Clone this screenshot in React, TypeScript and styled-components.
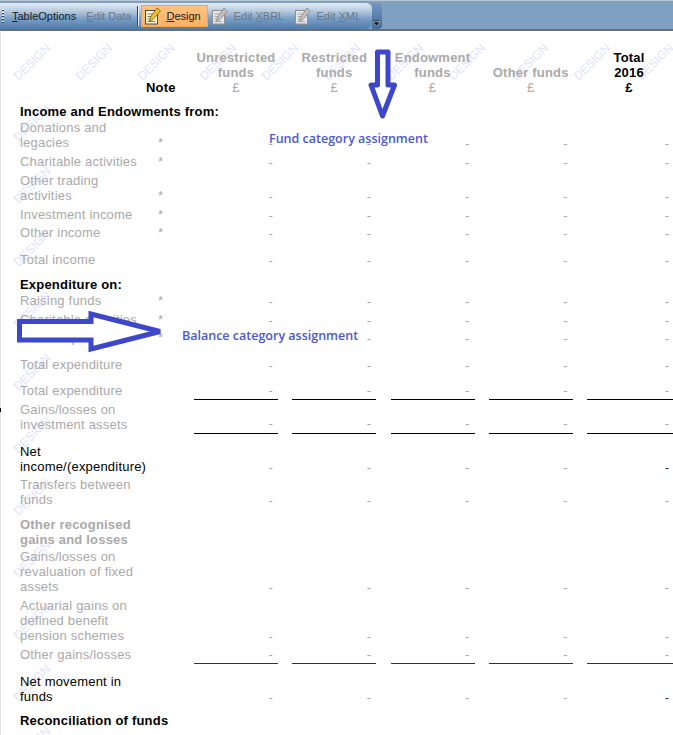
import React from 'react';
import styled, { createGlobalStyle } from 'styled-components';

const GlobalStyle = createGlobalStyle`
  html, body {
    margin: 0;
    padding: 0;
    background: #fff;
  }
`;

const Page = styled.div`
  position: relative;
  width: 673px;
  height: 735px;
  overflow: hidden;
  background: #fff;
  font-family: "Liberation Sans", Arial, sans-serif;
`;

const ToolbarStrip = styled.div`
  display: flex;
  height: 31px;
  box-sizing: border-box;
  padding-top: 2px;
  background: #7fa0c0;
  border-top: 1px solid #b9c6d4;
  border-bottom: 2px solid #6e6e6e;
`;

const ToolBand = styled.div`
  display: flex;
  align-items: center;
  width: 372px;
  padding-left: 2px;
  box-sizing: border-box;
  border-radius: 0 6px 6px 0;
  background: linear-gradient(#e3ebf3 0%, #b7cbdf 30%, #7b9fc5 60%, #4f7bab 100%);
`;

const Overflow = styled.div`
  position: relative;
  width: 10px;
  border-radius: 0 4px 4px 0;
  background: linear-gradient(#7397bf, #3f6c9e);
`;

const OverflowMark = styled.svg`
  position: absolute;
  left: 1px;
  bottom: 3px;
`;

const Grip = styled.div`
  width: 2px;
  height: 14px;
  margin-right: 8px;
  background: repeating-linear-gradient(#fff 0 1px, #1f3f66 1px 2px, transparent 2px 3px);
`;

const ToolLabel = styled.span<{ $muted?: boolean; $gap?: number }>`
  margin-left: ${(p) => p.$gap ?? 0}px;
  font-size: 11px;
  white-space: nowrap;
  color: ${(p) => (p.$muted ? '#68788a' : '#15202c')};
`;

const Key = styled.span`
  text-decoration: underline;
`;

const Separator = styled.div`
  width: 1px;
  height: 20px;
  margin: 0 3px 0 6px;
  background: #24466f;
  box-shadow: 1px 0 0 #e8eef5;
`;

const ToolButton = styled.div<{ $active?: boolean; $width: number }>`
  display: flex;
  align-items: center;
  gap: 5px;
  box-sizing: border-box;
  width: ${(p) => p.$width}px;
  height: 22px;
  padding-left: 3px;
  border: 1px solid ${(p) => (p.$active ? '#f2a548' : 'transparent')};
  background: ${(p) => (p.$active ? 'linear-gradient(#ffc27f, #ffb264)' : 'transparent')};
`;

const Sheet = styled.div`
  position: relative;
  padding: 18.7px 0 0 20px;
`;

const Grid = styled.div<{ $gap?: number }>`
  display: grid;
  grid-template-columns: 126px 48px repeat(5, 98.25px);
  margin-top: ${(p) => p.$gap ?? 0}px;
  font-size: 13px;
  line-height: 15.3px;
  letter-spacing: 0.2px;
`;

const tones = {
  muted: '#a9a9a9',
  strong: '#000',
};

const RowLabel = styled.div<{ $tone: keyof typeof tones; $bold?: boolean }>`
  color: ${(p) => tones[p.$tone]};
  font-weight: ${(p) => (p.$bold ? 700 : 400)};
`;

const Heading = styled.div<{ $gap?: number }>`
  margin-top: ${(p) => p.$gap ?? 0}px;
  font-size: 13px;
  line-height: 15.3px;
  letter-spacing: 0.2px;
  font-weight: 700;
  color: #000;
`;

const NoteMark = styled.div`
  align-self: end;
  padding-left: 12px;
  color: #a9a9a9;
`;

const NoteTitle = styled.div`
  align-self: end;
  padding-right: 20px;
  text-align: right;
  font-weight: 700;
  color: #000;
`;

const ColumnTitle = styled.div<{ $strong?: boolean }>`
  align-self: end;
  margin-right: 14.25px;
  text-align: center;
  font-weight: 700;
  color: ${(p) => (p.$strong ? '#000' : '#a9a9a9')};
`;

const Pound = styled.div<{ $strong?: boolean }>`
  font-weight: ${(p) => (p.$strong ? 700 : 400)};
`;

const Amount = styled.div<{ $dark?: boolean; $rule?: 'black' | 'soft' }>`
  align-self: end;
  height: 15.3px;
  margin-right: 14.25px;
  padding-right: 5px;
  text-align: right;
  color: ${(p) => (p.$dark ? '#333' : '#a9a9a9')};
  ${(p) =>
    p.$rule
      ? `padding-bottom: 1px; margin-bottom: -1px; border-bottom: 1px solid ${p.$rule === 'black' ? '#000' : '#333'};`
      : 'padding-top: 1px; margin-bottom: 0; height: 14.3px;'}

  &:last-child {
    margin-right: 11px;
  }
`;

const Mark = styled.span<{ $x: number; $y: number }>`
  position: absolute;
  left: ${(p) => p.$x - 30}px;
  top: ${(p) => p.$y - 8}px;
  width: 60px;
  text-align: center;
  font-size: 12px;
  line-height: 16px;
  color: #e0e2fb;
  transform: rotate(-45deg);
`;

const Arrow = styled.svg`
  position: absolute;
  left: 0;
  top: 0;
`;

const Note = styled.span<{ $x: number; $y: number }>`
  position: absolute;
  left: ${(p) => p.$x}px;
  top: ${(p) => p.$y}px;
  font-family: "Open Sans", sans-serif;
  font-size: 12.5px;
  font-weight: 600;
  line-height: 16px;
  white-space: nowrap;
  color: #4a58d2;
`;

const EdgeTick = styled.div`
  position: absolute;
  left: 0;
  top: 408px;
  width: 1px;
  height: 4px;
  background: #000;
`;

const EdgeLine = styled.div`
  position: absolute;
  left: 0;
  top: 31px;
  bottom: 0;
  width: 1px;
  background: #e2e2e2;
`;

const PageIcon: React.FC<{ muted?: boolean }> = ({ muted }) => (
  <svg width="16" height="18" viewBox="0 0 16 18">
    <rect x="0.5" y="3.5" width="12" height="13.5" fill={muted ? '#e6e6e6' : '#fff6d8'} stroke={muted ? '#8d8d8d' : '#4a4a3a'} />
    <path d="M2.5 7H9M2.5 9.5H7M2.5 12H7M2.5 14.5H10" stroke={muted ? '#a5a5a5' : '#7c7c60'} />
    <path d="M12 1 15.500 4 8 12.500 4.500 14 5.500 10Z" fill={muted ? '#bdbdbd' : '#f2c02e'} stroke={muted ? '#8a8a8a' : '#7a5a12'} strokeWidth="0.8" />
  </svg>
);

type RowData = {
  label: string;
  gap: number;
  star?: boolean;
  tone?: 'muted' | 'strong';
  bold?: boolean;
  rule?: 'black' | 'soft';
  noAmounts?: boolean;
  darkTotal?: boolean;
};

const COLUMNS = [0, 1, 2, 3, 4];

const Row: React.FC<{ row: RowData }> = ({ row }) => (
  <Grid $gap={row.gap}>
    <RowLabel $tone={row.tone ?? 'muted'} $bold={row.bold}>
      {row.label}
    </RowLabel>
    {row.star ? <NoteMark>*</NoteMark> : <div />}
    {!row.noAmounts &&
      COLUMNS.map((c) => (
        <Amount key={c} $rule={row.rule} $dark={row.darkTotal && c === 4}>
          -
        </Amount>
      ))}
  </Grid>
);

const firstBlock: RowData[] = [
  { label: 'Donations and legacies', gap: 1, star: true },
  { label: 'Charitable activities', gap: 3.4, star: true },
  { label: 'Other trading activities', gap: 3.7, star: true },
  { label: 'Investment income', gap: 3.4, star: true },
  { label: 'Other income', gap: 3, star: true },
  { label: 'Total income', gap: 11.4 },
];

const secondBlock: RowData[] = [
  { label: 'Raising funds', gap: 0.7, star: true },
  { label: 'Charitable activities', gap: 3.7, star: true },
  { label: 'Other expenditure', gap: 2.9, star: true },
  { label: 'Total expenditure', gap: 11.5 },
  { label: 'Total expenditure', gap: 10.7, rule: 'black' },
  { label: 'Gains/losses on investment assets', gap: 3, rule: 'black' },
  { label: 'Net income/(expenditure)', gap: 11.3, tone: 'strong', darkTotal: true },
  { label: 'Transfers between funds', gap: 2.3 },
  { label: 'Other recognised gains and losses', gap: 9.3, bold: true, noAmounts: true },
  { label: 'Gains/losses on revaluation of fixed assets', gap: 1.3 },
  { label: 'Actuarial gains on defined benefit pension schemes', gap: 3.1 },
  { label: 'Other gains/losses', gap: 3.6, rule: 'soft' },
  { label: 'Net movement in funds', gap: 10.7, tone: 'strong', darkTotal: true },
];

const titles = [
  { top: 'Unrestricted', mid: 'funds' },
  { top: 'Restricted', mid: 'funds' },
  { top: 'Endowment', mid: 'funds' },
  { top: '', mid: 'Other funds' },
  { top: 'Total', mid: '2016', strong: true },
];

const STAMP_X = [32, 94, 156, 218, 280, 342, 405, 467, 530, 592, 655];
const STAMP_Y = [123, 185, 248, 310, 372, 435, 497, 559, 621, 683, 745];

const App: React.FC = () => (
  <Page>
    <GlobalStyle />
    <ToolbarStrip>
      <ToolBand>
        <Grip />
        <ToolLabel>
          <Key>T</Key>ableOptions
        </ToolLabel>
        <ToolLabel $muted $gap={10}>
          <Key>E</Key>dit Data
        </ToolLabel>
        <Separator />
        <ToolButton $active $width={67}>
          <PageIcon />
          <ToolLabel>
            <Key>D</Key>esign
          </ToolLabel>
        </ToolButton>
        <ToolButton $width={83}>
          <PageIcon muted />
          <ToolLabel $muted>
            Edit <Key>X</Key>BRL
          </ToolLabel>
        </ToolButton>
        <ToolButton $width={72}>
          <PageIcon muted />
          <ToolLabel $muted>
            Edit <Key>X</Key>ML
          </ToolLabel>
        </ToolButton>
      </ToolBand>
      <Overflow>
        <OverflowMark width="7" height="6" viewBox="0 0 7 6">
          <path d="M0 0H6" stroke="#111" />
          <path d="M0 2H7L3.500 6Z" fill="#111" stroke="#fff" strokeWidth="0.4" />
        </OverflowMark>
      </Overflow>
    </ToolbarStrip>

    {STAMP_X.map((x) => (
      <Mark key={x} $x={x} $y={62}>
        DESIGN
      </Mark>
    ))}
    {STAMP_Y.map((y) => (
      <Mark key={y} $x={32} $y={y}>
        DESIGN
      </Mark>
    ))}

    <Sheet>
      <Grid>
        <div />
        <NoteTitle>Note</NoteTitle>
        {titles.map((t) => (
          <ColumnTitle key={t.mid + t.top} $strong={t.strong}>
            <div>{t.top || '\u00a0'}</div>
            <div>{t.mid}</div>
            <Pound $strong={t.strong}>£</Pound>
          </ColumnTitle>
        ))}
      </Grid>
      <Heading $gap={8}>Income and Endowments from:</Heading>
      {firstBlock.map((r, i) => (
        <Row key={i} row={r} />
      ))}
      <Heading $gap={9.7}>Expenditure on:</Heading>
      {secondBlock.map((r, i) => (
        <Row key={i} row={r} />
      ))}
      <Heading $gap={8.3}>Reconciliation of funds</Heading>
    </Sheet>

    <EdgeLine />
    <EdgeTick />

    <Arrow width="673" height="735" viewBox="0 0 673 735">
      <path d="M377.500 52H388V85H394.500L382.500 116L371 85H377.500Z" fill="#fff" stroke="#3d47c9" strokeWidth="5" strokeLinejoin="round" />
      <path d="M19.500 321.500H91V314L160 331.500L91 349V340H19.500Z" fill="#fff" stroke="#3d47c9" strokeWidth="5" />
    </Arrow>
    <Note $x={269} $y={131}>
      Fund category assignment
    </Note>
    <Note $x={182} $y={328}>
      Balance category assignment
    </Note>
  </Page>
);

export default App;
